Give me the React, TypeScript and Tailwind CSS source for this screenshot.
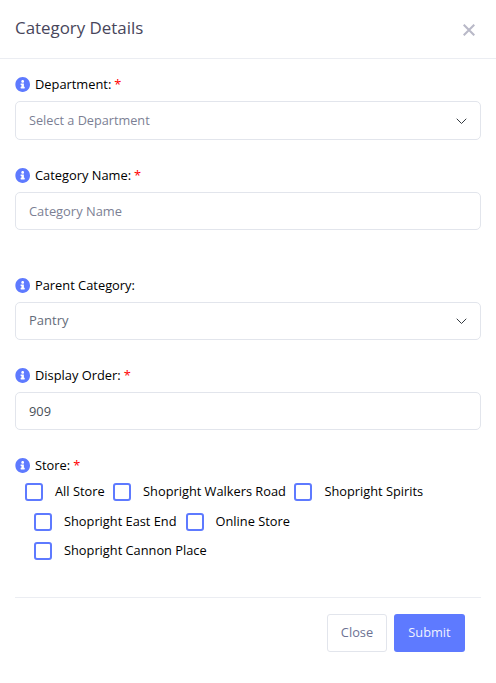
import React from "react";

function Info() {
  return (
    <svg className="size-[15px] shrink-0" viewBox="0 0 512 512" fill="#5e7aff">
      <path d="M262 4C122 4 12 116 12 256s110 252 250 252 250-112 250-252S402 4 262 4zm0 102c27 0 48 21 48 46s-21 46-48 46-48-21-48-46 21-46 48-46zm70 272c0 6.600-5.400 12-12 12H204c-6.600 0-12-5.400-12-12v-30c0-6.600 5.400-12 12-12h16v-60h-16c-6.600 0-12-5.400-12-12v-32c0-6.600 5.400-12 12-12h88c6.600 0 12 5.400 12 12v104h16c6.600 0 12 5.400 12 12v30z" />
    </svg>
  );
}

function Label({ text, required }: { text: string; required?: boolean }) {
  return (
    <div className="flex h-5 items-center text-[12.85px] text-black">
      <Info />
      <span className="ml-[5px]">{text}</span>
      {required && <span className="ml-[3px] text-[#f00]">*</span>}
    </div>
  );
}

function Chevron() {
  return (
    <svg className="h-3 w-3" viewBox="0 0 12 12" fill="none" stroke="#343a40" strokeWidth="1" strokeLinecap="round" strokeLinejoin="round">
      <path d="M2 4l4.500 4.500L11 4" />
    </svg>
  );
}

function Check({ text }: { text: string }) {
  return (
    <label className="flex h-5 items-center whitespace-nowrap text-black">
      <span className="size-[18px] rounded-[3px] border-2 border-[#5e7aff]" />
      <span className="ml-3 pb-0.5">{text}</span>
    </label>
  );
}

export default function App() {
  return (
    <div className="h-[683px] w-[496px] bg-white font-['Open_Sans',sans-serif] text-[12.8px] leading-5 text-[#7c7f94]">
      <header className="flex h-[59px] items-center justify-between border-b border-[#ebedf2] pr-[21px] pl-[15px]">
        <h1 className="pb-0.5 text-[16.9px] text-[#48465b]">Category Details</h1>
        <svg className="mt-px size-3" viewBox="0 0 12 12" stroke="#b9b9c8" strokeWidth="2.1">
          <path d="M.7.700l10.600 10.600M11.300.700L.7 11.300" />
        </svg>
      </header>
      <main className="px-[15px] pt-[15px]">
        <Label text="Department:" required />
        <div className="mt-[7px] flex h-[39px] items-center justify-between rounded-[5px] border border-[#e2e5ec] px-[13px]">
          <span className="pb-px text-[12.7px]">Select a Department</span> <Chevron />
        </div>
        <div className="mt-[25px]"><Label text="Category Name:" required /></div>
        <div className="mt-[7px] flex h-[38px] items-center rounded-[5px] border border-[#e2e5ec] px-[13px] text-[12.9px]">Category Name</div>
        <div className="mt-[45px]"><Label text="Parent Category:" /></div>
        <div className="mt-[7px] flex h-[38px] items-center justify-between rounded-[5px] border border-[#e2e5ec] px-[13px] text-[#646c7a]">
          <span className="pb-0.5 text-[13px]">Pantry</span> <Chevron />
        </div>
        <div className="mt-[25px]"><Label text="Display Order:" required /></div>
        <div className="mt-[7px] flex h-[38px] items-center rounded-[5px] border border-[#e2e5ec] px-[13px] text-[#495057]">909</div>
        <div className="mt-[25px]"><Label text="Store:" required /></div>
        <div className="mt-[7px] ml-[10px] flex gap-[8.500px]">
          <Check text="All Store" />
          <Check text="Shopright Walkers Road" />
          <Check text="Shopright Spirits" />
        </div>
        <div className="mt-[10px] ml-[19px] flex gap-[9px]">
          <Check text="Shopright East End" />
          <Check text="Online Store" />
        </div>
        <div className="mt-[9px] ml-[19px] flex"><Check text="Shopright Cannon Place" /></div>
        <footer className="mt-[36px] flex justify-end gap-[7px] border-t border-[#ebedf2] pt-4 pr-4">
          <button className="h-[38px] w-[60px] rounded-[3px] border border-[#e2e5ec] pb-0.5 text-[#6c7293]">Close</button>
          <button className="h-[38px] w-[71px] rounded-[3px] bg-[#5e7aff] pb-0.5 text-[#f0f2ff]">Submit</button>
        </footer>
      </main>
    </div>
  );
}
